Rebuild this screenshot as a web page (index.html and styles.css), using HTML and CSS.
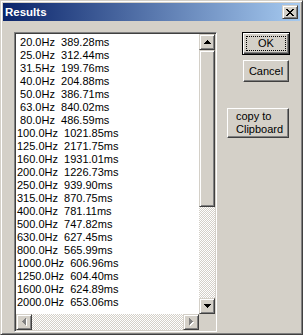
FILE: index.html
```html
<!DOCTYPE html>
<html lang="en">
<head>
  <meta charset="UTF-8">
  <title>Results</title>
  <link rel="stylesheet" href="styles.css">
</head>
<body>
  <div class="window">
    <div class="titlebar">
      <span class="title">Results</span>
      <div class="raised close">
        <svg width="8" height="7" viewBox="0 0 8 7"><path d="M0 0h2v1H0zM6 0h2v1H6zM1 1h2v1H1zM5 1h2v1H5zM2 2h4v1H2zM3 3h2v1H3zM2 4h4v1H2zM1 5h2v1H1zM5 5h2v1H5zM0 6h2v1H0zM6 6h2v1H6z" fill="#000"/></svg>
      </div>
    </div>
    <div class="content">
      <div class="listbox">
        <div class="items">
          <div class="row"> 20.0Hz  389.28ms</div>
          <div class="row"> 25.0Hz  312.44ms</div>
          <div class="row"> 31.5Hz  199.76ms</div>
          <div class="row"> 40.0Hz  204.88ms</div>
          <div class="row"> 50.0Hz  386.71ms</div>
          <div class="row"> 63.0Hz  840.02ms</div>
          <div class="row"> 80.0Hz  486.59ms</div>
          <div class="row">100.0Hz  1021.85ms</div>
          <div class="row">125.0Hz  2171.75ms</div>
          <div class="row">160.0Hz  1931.01ms</div>
          <div class="row">200.0Hz  1226.73ms</div>
          <div class="row">250.0Hz  939.90ms</div>
          <div class="row">315.0Hz  870.75ms</div>
          <div class="row">400.0Hz  781.11ms</div>
          <div class="row">500.0Hz  747.82ms</div>
          <div class="row">630.0Hz  627.45ms</div>
          <div class="row">800.0Hz  565.99ms</div>
          <div class="row">1000.0Hz  606.96ms</div>
          <div class="row">1250.0Hz  604.40ms</div>
          <div class="row">1600.0Hz  624.89ms</div>
          <div class="row">2000.0Hz  653.06ms</div>
        </div>
        <div class="vscroll">
          <div class="raised arrow">
            <svg width="7" height="4" viewBox="0 0 7 4"><path d="M3 0h1v1h1v1h1v1h1v1H0V3h1V2h1V1h1z" fill="#000"/></svg>
          </div>
          <div class="raised thumb"></div>
          <div class="track"></div>
          <div class="raised arrow">
            <svg width="7" height="4" viewBox="0 0 7 4"><path d="M0 0h7v1H6v1H5v1H4v1H3V3H2V2H1V1H0z" fill="#000"/></svg>
          </div>
        </div>
        <div class="hscroll">
          <div class="raised arrow">
            <svg width="5" height="8" viewBox="0 0 5 8">
              <path transform="translate(1 1)" d="M3 0h1v7H3V6H2V5H1V4H0V3h1V2h1V1h1z" fill="#fff"/>
              <path d="M3 0h1v7H3V6H2V5H1V4H0V3h1V2h1V1h1z" fill="#808080"/>
            </svg>
          </div>
          <div class="track"></div>
          <div class="raised arrow">
            <svg width="5" height="8" viewBox="0 0 5 8">
              <path transform="translate(1 1)" d="M0 0h1v1h1v1h1v1h1v1H3v1H2v1H1v1H0z" fill="#fff"/>
              <path d="M0 0h1v1h1v1h1v1h1v1H3v1H2v1H1v1H0z" fill="#808080"/>
            </svg>
          </div>
        </div>
        <div class="corner"></div>
      </div>
      <div class="buttons">
        <div class="btn default"><span class="focus">OK</span></div>
        <div class="btn cancel">Cancel</div>
        <div class="btn copy">copy to<br>Clipboard</div>
      </div>
    </div>
  </div>
</body>
</html>
```

FILE: styles.css
```css
body { margin: 0; background: #d4d0c8; font-family: "Liberation Sans", Arial, sans-serif; font-size: 11px; color: #000; }
.window {
  width: 303px;
  height: 335px;
  box-sizing: border-box;
  padding: 2px;
  background: #d4d0c8;
  border: 1px solid;
  border-color: #d4d0c8 #404040 #404040 #d4d0c8;
  box-shadow: inset 1px 1px #fff, inset -1px -1px #808080;
}
.titlebar {
  height: 18px;
  display: flex;
  align-items: center;
  justify-content: space-between;
  padding: 0 2px 0 2px;
  background: linear-gradient(to right, #0a246a, #a6caf0);
}
.title { color: #fff; font-weight: bold; font-size: 11.5px; line-height: 18px; }
.raised {
  box-sizing: border-box;
  background: #d4d0c8;
  border: 1px solid;
  border-color: #d4d0c8 #404040 #404040 #d4d0c8;
  box-shadow: inset 1px 1px #fff, inset -1px -1px #808080;
}
.close {
  width: 16px;
  height: 14px;
  display: flex;
  align-items: center;
  justify-content: center;
  padding-right: 1px;
}
.close svg, .arrow svg { display: block; }
.content {
  display: flex;
  padding: 11px 10px 0 11px;
}
.listbox {
  width: 203px;
  height: 300px;
  box-sizing: border-box;
  padding: 1px;
  background: #fff;
  border: 1px solid;
  border-color: #808080 #fff #fff #808080;
  box-shadow: inset 1px 1px #404040, inset -1px -1px #d4d0c8;
  display: grid;
  grid-template-columns: 1fr 16px;
  grid-template-rows: 1fr 16px;
}
.items {
  padding: 2px 0 0 1px;
  overflow: hidden;
  line-height: 13px;
}
.row { height: 13px; white-space: pre; }
.vscroll { display: flex; flex-direction: column; }
.hscroll { display: flex; }
.arrow {
  width: 16px;
  height: 16px;
  display: flex;
  align-items: center;
  justify-content: center;
}
.thumb { height: 157px; }
.track {
  flex: 1;
  background-image: repeating-conic-gradient(#d4d0c8 0% 25%, #fff 0% 50%);
  background-size: 2px 2px;
}
.corner { background: #d4d0c8; }
.buttons {
  flex: 1;
  display: flex;
  flex-direction: column;
  align-items: flex-end;
}
.btn {
  box-sizing: border-box;
  background: #d4d0c8;
  border: 1px solid;
  border-color: #fff #404040 #404040 #fff;
  box-shadow: inset -1px -1px #808080;
  display: flex;
  align-items: center;
  justify-content: center;
  line-height: 13px;
}
.btn.default {
  width: 48px;
  height: 23px;
  padding: 3px;
  border-color: #000;
  box-shadow: inset 1px 1px #fff, inset -1px -1px #404040, inset -2px -2px #808080;
}
.focus {
  flex: 1;
  align-self: stretch;
  display: flex;
  align-items: center;
  justify-content: center;
  border: 1px dotted #000;
}
.btn.cancel { width: 46px; height: 22px; margin: 5px 1px 0 0; }
.btn.copy {
  width: 62px;
  height: 30px;
  margin: 26px 1px 0 0;
  justify-content: flex-start;
  padding-left: 8px;
}
```
